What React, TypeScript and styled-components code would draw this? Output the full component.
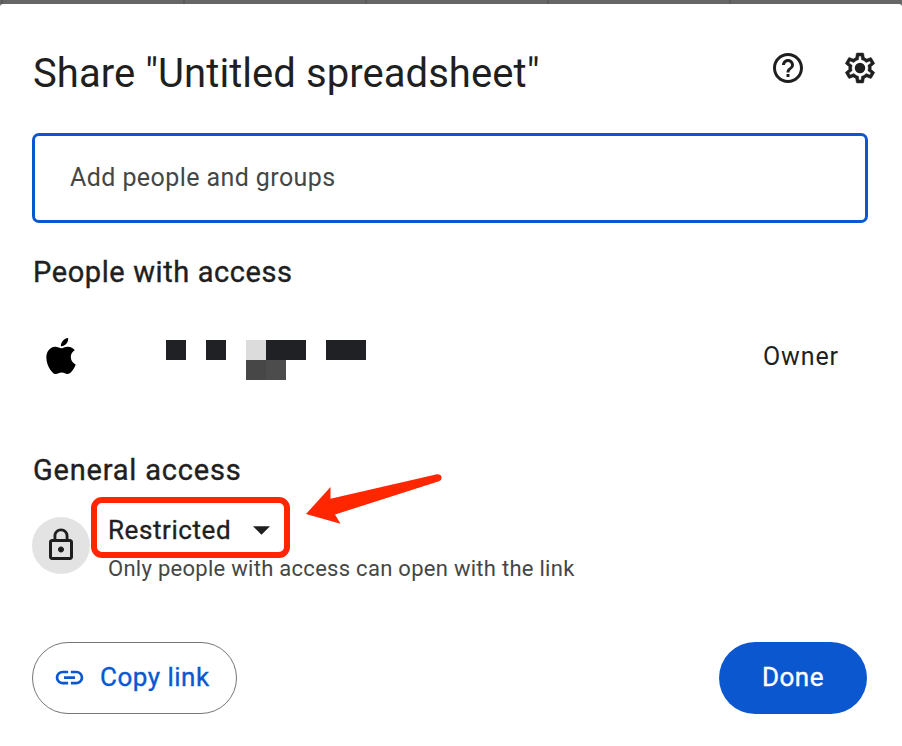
import styled, { createGlobalStyle } from 'styled-components';
import { MdHelpOutline, MdLink, MdLockOutline } from 'react-icons/md';
import { SiApple } from 'react-icons/si';

const SHEET_COLUMNS = [182, 182, 182, 182, 182];

// Each row is a run of 20px blocks, null leaves a gap
const MASKED_NAME: (string | null)[][] = [
  ['#202124', null, '#202124', null, '#dcdcdc', '#202124', '#202124', null, '#202124', '#202124'],
  [null, null, null, null, '#464746', '#4b4c4b', null, null, null, null],
];

export default function App() {
  return (
    <>
      <GlobalStyle />
      <Sheet>
        {SHEET_COLUMNS.map((width, index) => (
          <SheetColumn key={index} $width={width} />
        ))}
      </Sheet>
      <Dialog>
        <Header>
          <Title>Share "Untitled spreadsheet"</Title>
          <IconButton aria-label="Help">
            <MdHelpOutline size={36} />
          </IconButton>
          <IconButton aria-label="Settings">
            <SettingsIcon />
          </IconButton>
        </Header>
        <PeopleInput placeholder="Add people and groups" />
        <SectionTitle $spacing="0.6px">People with access</SectionTitle>
        <Person>
          <Avatar>
            <SiApple size={36} />
          </Avatar>
          <MaskedName>
            {MASKED_NAME.flat().map((color, index) => (
              <MaskBlock key={index} $color={color} />
            ))}
          </MaskedName>
          <Role>Owner</Role>
        </Person>
        <SectionTitle $spacing="0.8px">General access</SectionTitle>
        <Access>
          <LockBadge>
            <MdLockOutline size={36} />
          </LockBadge>
          <AccessInfo>
            <AccessSelect>
              Restricted
              <Caret viewBox="0 0 18 9">
                <path d="M0 0h18L9 9z" />
              </Caret>
              <Highlight />
              <Arrow viewBox="0 0 138 54">
                <path d="M1 41L25.5 14V25.8L132 1.2Q136 1 136.5 4Q137 7.5 134 8.3L30 41.5L35.5 50.8Z" />
              </Arrow>
            </AccessSelect>
            <AccessHint>Only people with access can open with the link</AccessHint>
          </AccessInfo>
        </Access>
        <Footer>
          <CopyButton>
            <MdLink size={33} />
            <ButtonLabel>Copy link</ButtonLabel>
          </CopyButton>
          <DoneButton>
            <ButtonLabel>Done</ButtonLabel>
          </DoneButton>
        </Footer>
      </Dialog>
    </>
  );
}

function SettingsIcon() {
  return (
    <svg width="36" height="36" viewBox="0 0 24 24" fill="currentColor">
      <path
        stroke="currentColor"
        strokeWidth="0.3"
        d="M19.43 12.98c.04-.32.07-.64.07-.98 0-.34-.03-.66-.07-.98l2.11-1.65c.19-.15.24-.42.12-.64l-2-3.46a.5.5 0 0 0-.61-.22l-2.49 1c-.52-.4-1.08-.73-1.69-.98l-.38-2.65A.488.488 0 0 0 14 2h-4c-.25 0-.46.18-.49.42l-.38 2.65c-.61.25-1.17.59-1.69.98l-2.49-1a.566.566 0 0 0-.18-.03c-.17 0-.34.09-.43.25l-2 3.46c-.13.22-.07.49.12.64l2.11 1.65c-.04.32-.07.65-.07.98 0 .33.03.66.07.98l-2.11 1.65c-.19.15-.24.42-.12.64l2 3.46a.5.5 0 0 0 .61.22l2.49-1c.52.4 1.08.73 1.69.98l.38 2.65c.03.24.24.42.49.42h4c.25 0 .46-.18.49-.42l.38-2.65c.61-.25 1.17-.59 1.69-.98l2.49 1c.06.02.12.03.18.03.17 0 .34-.09.43-.25l2-3.46c.12-.22.07-.49-.12-.64l-2.11-1.65zm-1.98-1.71c.04.31.05.52.05.73 0 .21-.02.43-.05.73l-.14 1.13.89.7 1.08.84-.7 1.21-1.27-.51-1.04-.42-.9.68c-.43.32-.84.56-1.25.73l-1.06.43-.16 1.13-.2 1.35h-1.4l-.19-1.35-.16-1.13-1.06-.43c-.43-.18-.83-.41-1.23-.71l-.91-.7-1.06.43-1.27.51-.7-1.21 1.08-.84.89-.7-.14-1.13c-.03-.31-.05-.54-.05-.74s.02-.43.05-.73l.14-1.13-.89-.7-1.08-.84.7-1.21 1.27.51 1.04.42.9-.68c.43-.32.84-.56 1.25-.73l1.06-.43.16-1.13.2-1.35h1.39l.19 1.35.16 1.13 1.06.43c.43.18.83.41 1.23.71l.91.7 1.06-.43 1.27-.51.7 1.21-1.07.85-.89.7.14 1.13z"
      />
      <circle cx="12" cy="12" r="3.5" />
    </svg>
  );
}

const GlobalStyle = createGlobalStyle`
  * {
    box-sizing: border-box;
  }

  body {
    margin: 0;

    font-family: Roboto, 'Liberation Sans', sans-serif;
    color: #1f1f1f;
    background-color: #666666;
  }

  button,
  input {
    font-family: inherit;
  }
`;

const Sheet = styled.div`
  display: flex;
  height: 4px;
  padding-left: 1px;
  overflow: hidden;

  background-color: #666666;
`;

const SheetColumn = styled.div<{ $width: number }>`
  flex: none;
  width: ${({ $width }) => $width}px;

  border-left: 2px solid #5a5a5a;
`;

const Dialog = styled.main`
  height: 742px;
  padding: 28px 24px 0 32px;

  background-color: #ffffff;
  border-radius: 3px 3px 0 0;
`;

const Header = styled.header`
  display: flex;
  align-items: center;
  column-gap: 36px;
  height: 72px;
`;

const Title = styled.h1`
  flex-grow: 1;
  margin: 11px 0 0 1px;

  font-size: 40px;
  font-weight: 400;
  line-height: 48px;
  letter-spacing: 0.06px;
  white-space: nowrap;
`;

const IconButton = styled.button`
  display: flex;
  width: 36px;
  height: 36px;
  padding: 0;

  color: #1f1f1f;
  background: none;
  border: none;
`;

const PeopleInput = styled.input`
  display: block;
  width: 836px;
  height: 90px;
  margin-top: 29px;
  padding: 0 35px 2px;

  font-size: 25px;
  letter-spacing: 0.42px;
  border: 3px solid #0b57d0;
  border-radius: 7px;
  outline: none;

  &::placeholder {
    color: #444746;
    opacity: 1;
  }
`;

const SectionTitle = styled.h2<{ $spacing: string }>`
  margin: 0;
  padding: 31px 0 0 1px;

  font-size: 29px;
  font-weight: 400;
  line-height: 36px;
  letter-spacing: ${({ $spacing }) => $spacing};
  -webkit-text-stroke: 0.4px currentColor;
`;

const Person = styled.div`
  display: flex;
  align-items: center;
  height: 131px;
  padding: 0 39px 0 0;
`;

const Avatar = styled.div`
  display: flex;
  justify-content: center;
  width: 58px;

  color: #000000;
`;

const MaskedName = styled.div`
  display: grid;
  grid-template-rows: repeat(2, 20px);
  grid-template-columns: repeat(10, 20px);
  margin: 9px 0 0 76px;
`;

const MaskBlock = styled.span<{ $color: string | null }>`
  background-color: ${({ $color }) => $color ?? 'transparent'};
`;

const Role = styled.span`
  margin: 2px 0 0 auto;

  font-size: 25px;
  letter-spacing: 0.9px;
`;

const Access = styled.div`
  display: flex;
  align-items: center;
  column-gap: 18px;
  height: 115px;
`;

const LockBadge = styled.div`
  display: flex;
  align-items: center;
  justify-content: center;
  width: 58px;
  height: 57px;
  padding-bottom: 2px;

  background-color: #e3e3e3;
  border-radius: 50%;
`;

const AccessInfo = styled.div`
  display: flex;
  flex-direction: column;
  row-gap: 5px;
  margin-top: 5px;
`;

const AccessSelect = styled.div`
  position: relative;
  display: flex;
  align-items: center;
  align-self: flex-start;
  column-gap: 22px;

  font-size: 26px;
  line-height: 36px;
  letter-spacing: 0.58px;
  -webkit-text-stroke: 0.35px currentColor;
`;

const Caret = styled.svg`
  width: 17px;
  height: 9px;
  margin-top: 2px;

  fill: currentColor;
`;

/* Marker drawn over the select */
const Highlight = styled.span`
  position: absolute;
  top: -15px;
  left: -17px;
  width: 199px;
  height: 61px;

  border: 6px solid #ff2600;
  border-radius: 11px;
`;

const Arrow = styled.svg`
  position: absolute;
  top: -39px;
  left: 197px;
  width: 138px;
  height: 54px;

  fill: #ff2600;
`;

const AccessHint = styled.p`
  margin: 0;

  font-size: 22px;
  line-height: 32px;
  letter-spacing: 0.28px;
  color: #444746;
  white-space: nowrap;
`;

const Footer = styled.footer`
  display: flex;
  justify-content: space-between;
  padding: 39px 11px 0 0;
`;

const Button = styled.button`
  display: flex;
  align-items: center;
  justify-content: center;
  height: 72px;
  padding: 0 0 2px;

  border-radius: 36px;
`;

const ButtonLabel = styled.span`
  font-size: 26px;
  letter-spacing: 0.5px;
  -webkit-text-stroke: 0.35px currentColor;
`;

const CopyButton = styled(Button)`
  column-gap: 14px;
  justify-content: flex-start;
  width: 205px;
  padding-left: 20px;

  color: #0b57d0;
  background-color: #ffffff;
  border: 1px solid #747775;
`;

const DoneButton = styled(Button)`
  width: 148px;

  color: #ffffff;
  background-color: #0b57d0;
  border: none;
`;
